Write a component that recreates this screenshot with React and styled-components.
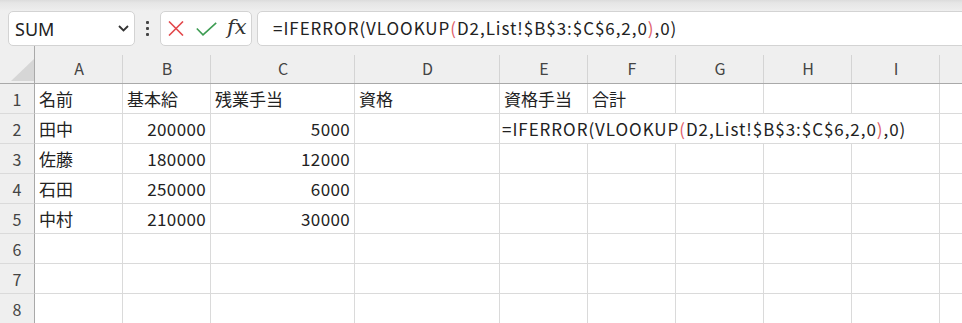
import styled, { createGlobalStyle } from "styled-components";

const GlobalStyle = createGlobalStyle`
  html, body {
    margin: 0;
    padding: 0;
    background: #efefef;
    overflow: hidden;
  }
`;

const CELL_FONT = `"Noto Sans CJK JP", "Noto Sans", sans-serif`;
const UI_FONT = `"Noto Sans", "Open Sans", sans-serif`;

const Page = styled.div`
  width: 962px;
  height: 323px;
  overflow: hidden;
  background: #efefef;
`;

const FormulaBar = styled.div`
  display: flex;
  height: 46px;
  box-sizing: border-box;
  padding: 11px 0 0 8px;
  background: linear-gradient(to bottom, #dcdcdc 0, #e6e6e6 3px, #ececec 9px, #efefef 11px);
`;

const Box = styled.div`
  height: 35px;
  box-sizing: border-box;
  border: 1px solid #d3d3d3;
  border-radius: 5px;
  background: #fff;
  display: flex;
  align-items: center;
`;

const NameBox = styled(Box)`
  width: 127px;
  justify-content: space-between;
  padding: 0 5px 0 6px;
  font-family: ${UI_FONT};
  font-size: 18px;
  color: #222;
`;

const Dots = styled.div`
  width: 25px;
  display: flex;
  flex-direction: column;
  align-items: center;
  justify-content: center;
  gap: 3px;
  span {
    width: 3px;
    height: 3px;
    background: #444;
    border-radius: 1px;
  }
`;

const IconBox = styled(Box)`
  width: 92px;
  padding-left: 7px;
  gap: 12px;
`;

const Fx = styled.span`
  font-family: "DejaVu Serif", "Liberation Serif", serif;
  font-style: italic;
  font-size: 21px;
  color: #333;
  margin-left: -2px;
  line-height: 1;
  padding-bottom: 3px;
`;

const FormulaInput = styled(Box)`
  flex: 1;
  margin-left: 5px;
  margin-right: -10px;
  padding-left: 15px;
  padding-bottom: 3px;
  border-radius: 5px 0 0 5px;
  font-family: ${CELL_FONT};
  font-size: 17px;
  letter-spacing: 0.95px;
  color: #222;
  white-space: nowrap;
`;

const Paren = styled.span`
  color: ${(p) => p.$color || "inherit"};
`;

const Sheet = styled.div`
  display: grid;
  grid-template-columns: 35px 88px 88px 144px 145px 88px 88px 88px 88px 88px 88px;
  grid-template-rows: 38px repeat(8, 30px);
  background: #fff;
`;

const Corner = styled.div`
  background: #efefef;
  border-right: 1px solid #a9a9a9;
  border-bottom: 1px solid #a9a9a9;
  display: flex;
  align-items: flex-end;
  justify-content: flex-end;
  padding-bottom: 2px;
`;

const SelectAll = styled.div`
  width: 23px;
  height: 22px;
  background: #d6d6d6;
  clip-path: polygon(100% 0, 100% 100%, 0 100%);
`;

const ColHead = styled.div`
  position: relative;
  background: #efefef;
  border-bottom: 1px solid #a9a9a9;
  display: flex;
  align-items: center;
  justify-content: center;
  padding-top: 6px;
  font-family: ${CELL_FONT};
  font-size: 16px;
  color: #444;
  &::after {
    content: "";
    position: absolute;
    right: 0;
    top: 9px;
    bottom: 0;
    width: 1px;
    background: #d4d4d4;
  }
`;

const RowHead = styled.div`
  background: #efefef;
  border-right: 1px solid #a9a9a9;
  border-bottom: 1px solid #dadada;
  display: flex;
  align-items: center;
  justify-content: center;
  font-family: ${CELL_FONT};
  font-size: 16px;
  color: #444;
`;

const Cell = styled.div`
  grid-column: ${(p) => (p.$span ? `span ${p.$span}` : "auto")};
  border-right: 1px solid #dadada;
  border-bottom: 1px solid #dadada;
  display: flex;
  align-items: center;
  justify-content: ${(p) => (p.$num ? "flex-end" : "flex-start")};
  padding: 0 ${(p) => (p.$num ? "4px" : "0")} 1px ${(p) => (p.$num ? "0" : "4px")};
  font-family: ${CELL_FONT};
  font-size: 17px;
  letter-spacing: ${(p) => (p.$num ? "0.35px" : "0")};
  color: #222;
  white-space: nowrap;
  overflow: hidden;
`;

const FormulaCell = styled(Cell)`
  padding-left: 2px;
  letter-spacing: 0.95px;
`;

const columns = ["A", "B", "C", "D", "E", "F", "G", "H", "I", ""];

const rows = [
  ["名前", "基本給", "残業手当", "資格", "資格手当", "合計", "", "", "", ""],
  ["田中", "200000", "5000", ""],
  ["佐藤", "180000", "12000", "", "", "", "", "", "", ""],
  ["石田", "250000", "6000", "", "", "", "", "", "", ""],
  ["中村", "210000", "30000", "", "", "", "", "", "", ""],
  ["", "", "", "", "", "", "", "", "", ""],
  ["", "", "", "", "", "", "", "", "", ""],
  ["", "", "", "", "", "", "", "", "", ""],
];

const Formula = () => (
  <>
    =IFERROR(VLOOKUP<Paren $color="#e0606a">(</Paren>D2,List!$B$3:$C$6,2,0
    <Paren $color="#e0606a">)</Paren>,0)
  </>
);

const Chevron = () => (
  <svg width="11" height="7" viewBox="0 0 11 7">
    <polyline points="1,1 5.5,5.5 10,1" fill="none" stroke="#333" strokeWidth="1.8" />
  </svg>
);

const Cross = () => (
  <svg width="16" height="15" viewBox="0 0 16 15">
    <path d="M1 0.5 L15 14.5 M15 0.5 L1 14.5" stroke="#e2474b" strokeWidth="1.6" fill="none" />
  </svg>
);

const Check = () => (
  <svg width="21" height="14" viewBox="0 0 21 14">
    <polyline points="0.8,6.5 7,12.8 20.2,0.8" fill="none" stroke="#3d9c52" strokeWidth="1.6" />
  </svg>
);

const isNum = (v) => /^\d+$/.test(v);

export default function App() {
  return (
    <Page>
      <GlobalStyle />
      <FormulaBar>
        <NameBox>
          SUM
          <Chevron />
        </NameBox>
        <Dots>
          <span />
          <span />
          <span />
        </Dots>
        <IconBox>
          <Cross />
          <Check />
          <Fx>fx</Fx>
        </IconBox>
        <FormulaInput>
          <Formula />
        </FormulaInput>
      </FormulaBar>
      <Sheet>
        <Corner>
          <SelectAll />
        </Corner>
        {columns.map((c, i) => (
          <ColHead key={i}>{c}</ColHead>
        ))}
        {rows.map((r, ri) => (
          <>
            <RowHead key={`h${ri}`}>{ri + 1}</RowHead>
            {r.map((v, ci) => (
              <Cell key={`${ri}-${ci}`} $num={isNum(v)}>
                {v}
              </Cell>
            ))}
            {ri === 1 && (
              <>
                <FormulaCell $span={5}>
                  <Formula />
                </FormulaCell>
                <Cell />
              </>
            )}
          </>
        ))}
      </Sheet>
    </Page>
  );
}
